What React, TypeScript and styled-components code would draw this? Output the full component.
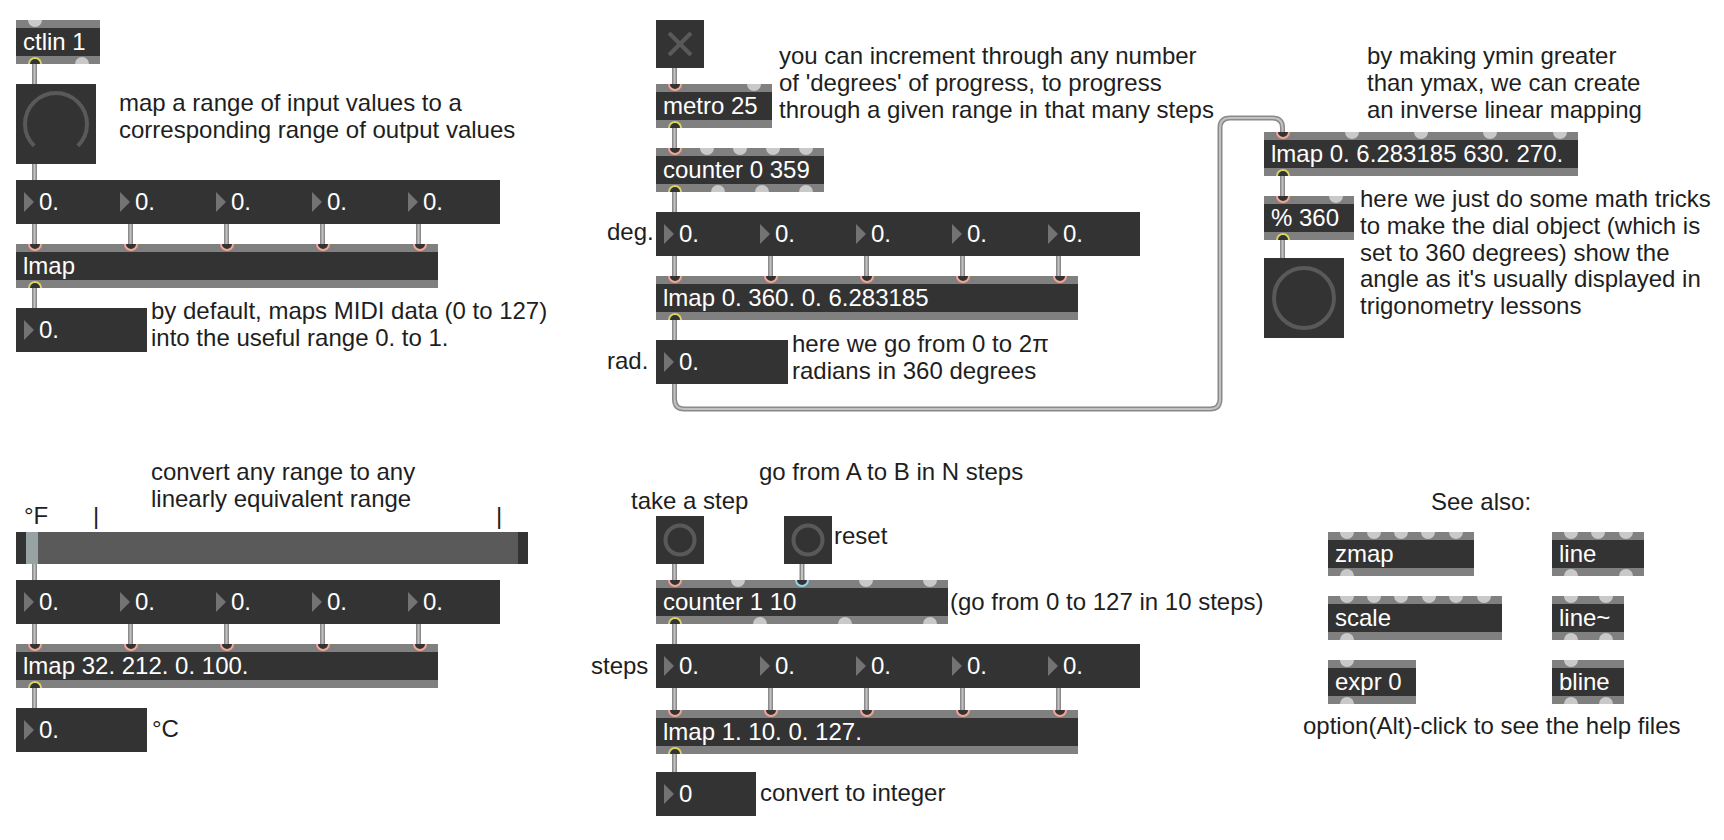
import React from 'react';
import styled, { createGlobalStyle, css } from 'styled-components';

const PINK = '#f2a594';
const YEL = '#d8d45e';
const CYAN = '#95d3e8';

type Ring = string | null;

const GlobalStyle = createGlobalStyle`
    html, body {
        margin: 0;
        padding: 0;
        background: #ffffff;
    }
    body {
        font-family: 'Liberation Sans', Arial, Helvetica, sans-serif;
    }
`;

type Pos = { $x: number; $y: number };

const placed = css<Pos>`
    position: absolute;
    left: ${p => p.$x}px;
    top: ${p => p.$y}px;
`;

const Canvas = styled.div`
    position: relative;
    width: 1724px;
    height: 840px;
    overflow: hidden;
    background: #ffffff;
    font-family: 'Liberation Sans', Arial, Helvetica, sans-serif;
    font-size: 24px;
`;

const WireLayer = styled.svg`
    position: absolute;
    left: 0;
    top: 0;
`;

const ObjectBox = styled.div<Pos & { $w: number }>`
    ${placed};
    width: ${p => p.$w}px;
    height: 44px;
    display: flex;
    flex-direction: column;
    background: #333333;
    overflow: hidden;
`;

const Strip = styled.div`
    position: relative;
    height: 8px;
    background: #808080;
`;

const ObjectText = styled.div`
    flex: 1;
    padding-left: 7px;
    color: #ffffff;
    line-height: 28px;
    white-space: nowrap;
`;

const Port = styled.span<{ $at: number; $edge: 'top' | 'bottom'; $ring: Ring }>`
    position: absolute;
    left: ${p => p.$at - 7}px;
    ${p => p.$edge}: -7px;
    width: 14px;
    height: 14px;
    border-radius: 50%;
    box-sizing: border-box;
    background: ${p => (p.$ring ? '#333333' : '#c9c9c9')};
    border: ${p => (p.$ring ? `2px solid ${p.$ring}` : 'none')};
`;

const NumberBox = styled.div<Pos & { $w: number }>`
    ${placed};
    width: ${p => p.$w}px;
    height: 44px;
    display: flex;
    background: #333333;
`;

const NumberCell = styled.div<{ $w: number }>`
    width: ${p => p.$w}px;
    flex: none;
    display: flex;
    align-items: center;
    padding-left: 8px;
    box-sizing: border-box;
`;

const Arrow = styled.span`
    width: 0;
    height: 0;
    border-top: 10px solid transparent;
    border-bottom: 10px solid transparent;
    border-left: 10px solid #737373;
`;

const NumberText = styled.span`
    margin-left: 5px;
    color: #ffffff;
    line-height: 44px;
`;

const Square = styled.div<Pos & { $size: number }>`
    ${placed};
    width: ${p => p.$size}px;
    height: ${p => p.$size}px;
    background: #333333;
    display: flex;
    align-items: center;
    justify-content: center;
`;

const Slider = styled.div<Pos & { $w: number }>`
    ${placed};
    width: ${p => p.$w}px;
    height: 32px;
    box-sizing: border-box;
    border-left: 10px solid #333333;
    border-right: 10px solid #333333;
    background: #5a5a5a;
    display: flex;
`;

const SliderKnob = styled.div`
    width: 12px;
    background: #98a1a3;
`;

const Comment = styled.div<Pos>`
    ${placed};
    color: #1e1e1e;
    line-height: 26.8px;
    white-space: pre;
`;

const portXs = (n: number, w: number) =>
    n === 1 ? [18.5] : Array.from({ length: n }, (_, i) => 18.5 + (i * (w - 37)) / (n - 1));

type Obj = { x: number; y: number; w: number; text: string; ins: Ring[]; outs: Ring[] };

const P5: Ring[] = [PINK, PINK, PINK, PINK, PINK];
const n = (k: number): Ring[] => Array(k).fill(null);

const objects: Obj[] = [
    { x: 16, y: 20, w: 84, text: 'ctlin 1', ins: n(1), outs: [YEL, null] },
    { x: 16, y: 244, w: 422, text: 'lmap', ins: P5, outs: [YEL] },
    { x: 16, y: 644, w: 422, text: 'lmap 32. 212. 0. 100.', ins: P5, outs: [YEL] },
    { x: 656, y: 84, w: 116, text: 'metro 25', ins: [PINK, null], outs: [YEL] },
    { x: 656, y: 148, w: 168, text: 'counter 0 359', ins: [PINK, ...n(4)], outs: [YEL, ...n(3)] },
    { x: 656, y: 276, w: 422, text: 'lmap 0. 360. 0. 6.283185', ins: P5, outs: [YEL] },
    { x: 1264, y: 132, w: 314, text: 'lmap 0. 6.283185 630. 270.', ins: [PINK, ...n(4)], outs: [YEL] },
    { x: 1264, y: 196, w: 90, text: '% 360', ins: [PINK, null], outs: [YEL] },
    { x: 656, y: 580, w: 292, text: 'counter 1 10', ins: [PINK, null, CYAN, null, null], outs: [YEL, ...n(3)] },
    { x: 656, y: 710, w: 422, text: 'lmap 1. 10. 0. 127.', ins: P5, outs: [YEL] },
    { x: 1328, y: 532, w: 146, text: 'zmap', ins: n(5), outs: n(1) },
    { x: 1552, y: 532, w: 92, text: 'line', ins: n(3), outs: n(2) },
    { x: 1328, y: 596, w: 174, text: 'scale', ins: n(6), outs: n(1) },
    { x: 1552, y: 596, w: 72, text: 'line~', ins: n(2), outs: n(2) },
    { x: 1328, y: 660, w: 88, text: 'expr 0', ins: n(1), outs: n(1) },
    { x: 1552, y: 660, w: 72, text: 'bline', ins: n(1), outs: n(2) },
];

const numberRows = [
    { x: 16, y: 180 },
    { x: 656, y: 212 },
    { x: 16, y: 580 },
    { x: 656, y: 644 },
];

const numbers = [
    { x: 16, y: 308, w: 131, v: '0.' },
    { x: 656, y: 340, w: 132, v: '0.' },
    { x: 16, y: 708, w: 131, v: '0.' },
    { x: 656, y: 772, w: 100, v: '0' },
];

const comments: [string, number, number][] = [
    ['map a range of input values to a\ncorresponding range of output values', 119, 90],
    ['by default, maps MIDI data (0 to 127)\ninto the useful range 0. to 1.', 151, 298],
    ["you can increment through any number\nof 'degrees' of progress, to progress\nthrough a given range in that many steps", 779, 43],
    ['by making ymin greater\nthan ymax, we can create\nan inverse linear mapping', 1367, 43],
    ["here we just do some math tricks\nto make the dial object (which is\nset to 360 degrees) show the\nangle as it's usually displayed in\ntrigonometry lessons", 1360, 186],
    ['here we go from 0 to 2π\nradians in 360 degrees', 792, 331],
    ['deg.', 607, 219],
    ['rad.', 607, 348],
    ['convert any range to any\nlinearly equivalent range', 151, 459],
    ['°F', 24, 503],
    ['|', 93, 503],
    ['|', 496, 503],
    ['°C', 152, 716],
    ['go from A to B in N steps', 759, 459],
    ['take a step', 631, 488],
    ['reset', 834, 523],
    ['(go from 0 to 127 in 10 steps)', 950, 589],
    ['steps', 591, 653],
    ['convert to integer', 760, 780],
    ['See also:', 1431, 489],
    ['option(Alt)-click to see the help files', 1303, 713],
];

// vertical patch cords: [x, fromY, toY]
const L = 34.5;
const M = 674.5;
const cords: [number, number, number][] = [
    [L, 64, 84],
    [L, 164, 180],
    [L, 288, 308],
    [M, 68, 84],
    [M, 128, 148],
    [M, 192, 212],
    [M, 320, 340],
    [1282.5, 176, 196],
    [1282.5, 240, 258],
    [L, 564, 580],
    [L, 688, 708],
    [M, 564, 580],
    [802, 564, 580],
    [M, 624, 644],
    [M, 754, 772],
];
for (let i = 0; i < 5; i++) {
    cords.push([L + 96 * i, 224, 244]);
    cords.push([M + 96 * i, 256, 276]);
    cords.push([L + 96 * i, 624, 644]);
    cords.push([M + 96 * i, 688, 710]);
}

const loopCord =
    'M674.5 320 V399 Q674.5 409 684.5 409 H1210 Q1220 409 1220 399 V128 Q1220 118 1230 118 H1272.5 Q1282.5 118 1282.5 128 V132';

const Cord = ({ d }: { d: string }) => (
    <>
        <path d={d} fill="none" stroke="#8a8a8a" strokeWidth={5} />
        <path d={d} fill="none" stroke="#c2c2c2" strokeWidth={2} />
    </>
);

const MaxObject = ({ o }: { o: Obj }) => (
    <ObjectBox $x={o.x} $y={o.y} $w={o.w}>
        <Strip>
            {portXs(o.ins.length, o.w).map((px, i) => (
                <Port key={i} $at={px} $edge="top" $ring={o.ins[i]} />
            ))}
        </Strip>
        <ObjectText>{o.text}</ObjectText>
        <Strip>
            {portXs(o.outs.length, o.w).map((px, i) => (
                <Port key={i} $at={px} $edge="bottom" $ring={o.outs[i]} />
            ))}
        </Strip>
    </ObjectBox>
);

const Cell = ({ w, v }: { w: number; v: string }) => (
    <NumberCell $w={w}>
        <Arrow />
        <NumberText>{v}</NumberText>
    </NumberCell>
);

export default function App() {
    return (
        <>
            <GlobalStyle />
            <Canvas>
                <WireLayer width={1724} height={840}>
                    {cords.map(([x, a, b], i) => (
                        <Cord key={i} d={`M${x} ${a} V${b}`} />
                    ))}
                    <Cord d={loopCord} />
                </WireLayer>

                {objects.map((o, i) => (
                    <MaxObject key={i} o={o} />
                ))}

                {numberRows.map((r, i) => (
                    <NumberBox key={i} $x={r.x} $y={r.y} $w={484}>
                        {[96, 96, 96, 96, 100].map((w, j) => (
                            <Cell key={j} w={w} v="0." />
                        ))}
                    </NumberBox>
                ))}

                {numbers.map((b, i) => (
                    <NumberBox key={i} $x={b.x} $y={b.y} $w={b.w}>
                        <Cell w={b.w} v={b.v} />
                    </NumberBox>
                ))}

                <Square $x={16} $y={84} $size={80}>
                    <svg width="80" height="80">
                        <path d="M18.1 61.9 A31 31 0 1 1 61.9 61.9" fill="none" stroke="#595959" strokeWidth={4} />
                    </svg>
                </Square>
                <Square $x={1264} $y={258} $size={80}>
                    <svg width="80" height="80">
                        <circle cx="40" cy="40" r="30" fill="none" stroke="#595959" strokeWidth={4} />
                    </svg>
                </Square>

                <Square $x={656} $y={20} $size={48}>
                    <svg width="48" height="48">
                        <path d="M13 13 L35 35 M35 13 L13 35" stroke="#595959" strokeWidth={4} />
                    </svg>
                </Square>

                {[656, 784].map(x => (
                    <Square key={x} $x={x} $y={516} $size={48}>
                        <svg width="48" height="48">
                            <circle cx="24" cy="24" r="14.5" fill="none" stroke="#595959" strokeWidth={4} />
                        </svg>
                    </Square>
                ))}

                <Slider $x={16} $y={532} $w={512}>
                    <SliderKnob />
                </Slider>

                {comments.map(([t, x, y], i) => (
                    <Comment key={i} $x={x} $y={y}>
                        {t}
                    </Comment>
                ))}
            </Canvas>
        </>
    );
}
